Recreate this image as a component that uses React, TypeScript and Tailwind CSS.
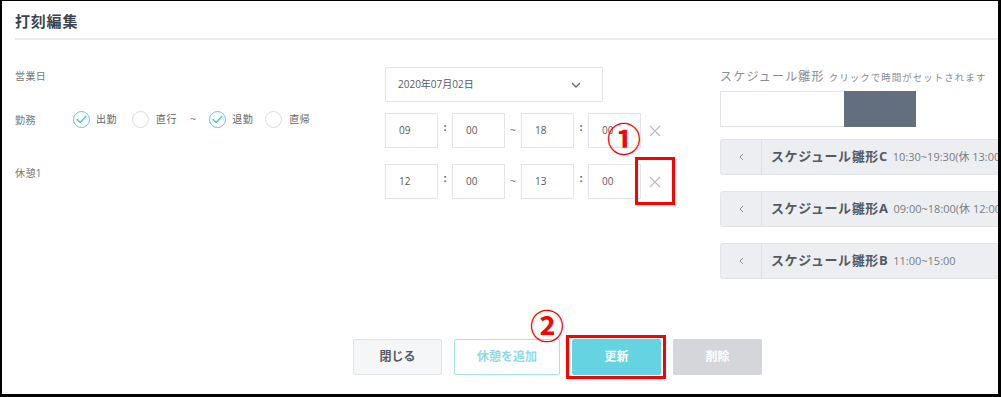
import React from "react";

const XIcon = () => (
  <svg width="12" height="12" viewBox="0 0 12 12" className="block">
    <path d="M1 1 L11 11 M11 1 L1 11" stroke="#b9bcc2" strokeWidth="1.1" fill="none" />
  </svg>
);

const Check = ({ checked }: { checked: boolean }) => (
  <span
    className={
      checked
        ? "w-[17px] h-[17px] rounded-full border-[1.5px] border-[#5ccbdc] flex items-center justify-center bg-white"
        : "w-[17px] h-[17px] rounded-full border-[1.5px] border-[#dcdde0] bg-white"
    }
  >
    {checked && (
      <svg width="11" height="9" viewBox="0 0 11 9">
        <path d="M1.2 4.6 L4.2 7.5 L9.8 1.4" stroke="#5ccbdc" strokeWidth="1.6" fill="none" strokeLinecap="round" strokeLinejoin="round" />
      </svg>
    )}
  </span>
);

const TimeBox = ({ v }: { v: string }) => (
  <div className="w-[53px] shrink-0 h-full border border-[#e3e5e9] bg-white flex items-center pl-[13px] text-[10px] text-[#555a62]">
    {v}
  </div>
);

const TimeRow = ({ a, b, c, d, cls }: { a: string; b: string; c: string; d: string; cls: string }) => (
  <div className={`flex items-stretch h-[35px] ${cls}`}>
    <TimeBox v={a} />
    <div className="w-[14px] flex justify-center text-[11px] text-[#666] font-bold pt-[6px]">:</div>
    <TimeBox v={b} />
    <div className="w-[16px] flex justify-center items-center text-[11px] text-[#777]">~</div>
    <TimeBox v={c} />
    <div className="w-[14px] flex justify-center text-[11px] text-[#666] font-bold pt-[6px]">:</div>
    <TimeBox v={d} />
    <div className="ml-[8px] flex items-center">
      <XIcon />
    </div>
  </div>
);

const Acc = ({ title, time, cls }: { title: string; time: string; cls: string }) => (
  <div className={`w-[330px] shrink-0 h-[36px] flex items-stretch bg-[#eceef1] border border-[#e2e4e8] rounded-[3px] ${cls}`}>
    <div className="w-[41px] shrink-0 flex items-center justify-center border-r border-[#dfe1e5]">
      <svg width="5" height="8" viewBox="0 0 5 8">
        <path d="M4 1 L1 4 L4 7" stroke="#8a8e95" strokeWidth="1" fill="none" />
      </svg>
    </div>
    <div className="flex items-center pl-[9px] whitespace-nowrap">
      <span className="text-[13px] font-bold text-[#555a62] tracking-[0.6px]">{title}</span>
      <span className="ml-[5px] text-[11px] text-[#7a7e85]">{time}</span>
    </div>
  </div>
);

export default function App() {
  return (
    <div className="w-[1001px] h-[397px] bg-white border-black border-t border-l-2 border-r-[3px] border-b-[3px] overflow-hidden relative font-['Open_Sans','Noto_Sans_CJK_JP',sans-serif]">
      <div className="pl-[13px]">
        <div className="h-[37px] pt-[4px] flex items-center text-[15px] font-bold text-[#3d4450] tracking-[0.8px]">
          打刻編集
        </div>
        <div className="h-[2px] bg-[#ebebf1]" />
        <div className="flex">
          {/* left labels */}
          <div className="w-[370px] shrink-0 flex flex-col">
            <div className="mt-[28px] h-[16px] flex items-center text-[10px] text-[#777] tracking-[0.4px]">営業日</div>
            <div className="mt-[26px] h-[18px] flex items-center">
              <div className="w-[58px] text-[10px] text-[#777] tracking-[0.4px] pt-[2px]">勤務</div>
              <Check checked />
              <span className="ml-[6px] text-[10px] text-[#666] tracking-[0.5px]">出勤</span>
              <span className="ml-[15px] flex"><Check checked={false} /></span>
              <span className="ml-[7px] text-[10px] text-[#666] tracking-[0.5px]">直行</span>
              <span className="ml-[13px] text-[11px] text-[#777]">~</span>
              <span className="ml-[13px] flex"><Check checked /></span>
              <span className="ml-[6px] text-[10px] text-[#666] tracking-[0.5px]">退勤</span>
              <span className="ml-[12px] flex"><Check checked={false} /></span>
              <span className="ml-[7px] text-[10px] text-[#666] tracking-[0.5px]">直帰</span>
            </div>
            <div className="mt-[37px] h-[16px] flex items-center text-[10px] text-[#777] tracking-[0.4px]">休憩1</div>
          </div>
          {/* middle */}
          <div className="w-[335px] shrink-0 flex flex-col">
            <div className="mt-[27px] w-[218px] h-[35px] border border-[#e3e5e9] flex items-center justify-between pl-[12px] pr-[21px]">
              <span className="text-[10px] text-[#555a62]">2020年07月02日</span>
              <svg width="10" height="6" viewBox="0 0 10 6">
                <path d="M1 1 L5 5 L9 1" stroke="#666b73" strokeWidth="1.4" fill="none" />
              </svg>
            </div>
            <TimeRow a="09" b="00" c="18" d="00" cls="mt-[11px]" />
            <TimeRow a="12" b="00" c="13" d="00" cls="mt-[16px]" />
          </div>
          {/* right */}
          <div className="flex-1 min-w-0 flex flex-col">
            <div className="mt-[28px] h-[16px] flex items-baseline whitespace-nowrap text-[#8a8d93]">
              <span className="text-[12px] tracking-[1.2px]">スケジュール雛形</span>
              <span className="ml-[4px] text-[9.5px] tracking-[1px]">クリックで時間がセットされます</span>
            </div>
            <div className="mt-[7px] flex h-[36px]">
              <div className="w-[124px] border border-[#e3e5e9] border-r-0 bg-white" />
              <div className="w-[72px] bg-[#636e7e]" />
            </div>
            <Acc title="スケジュール雛形C" time="10:30~19:30(休 13:00~14:00)" cls="mt-[12px]" />
            <Acc title="スケジュール雛形A" time="09:00~18:00(休 12:00~13:00)" cls="mt-[16px]" />
            <Acc title="スケジュール雛形B" time="11:00~15:00" cls="mt-[16px]" />
          </div>
        </div>
        <div className="mt-[60px] ml-[338px] flex gap-[12px] h-[36px]">
          <button className="w-[89px] h-full bg-[#f5f6f8] border border-[#e1e4e9] rounded-[2px] text-[12px] font-bold text-[#555a62]">閉じる</button>
          <button className="w-[106px] h-full bg-white border-[1.5px] border-[#a9e2ec] rounded-[2px] text-[12px] font-bold text-[#92d9e5]">休憩を追加</button>
          <button className="w-[89px] h-full bg-[#66d3e3] rounded-[2px] text-[12px] font-bold text-white">更新</button>
          <button className="w-[89px] h-full bg-[#d4d6d9] rounded-[2px] text-[12px] font-bold text-white">削除</button>
        </div>
      </div>

      {/* annotations */}
      <div className="absolute left-[604px] top-[119px] w-[36px] h-[36px] flex items-center justify-center text-[34px] leading-none font-bold text-[#ff0000] font-['Noto_Sans_CJK_JP',sans-serif]">①</div>
      <div className="absolute left-[633px] top-[156px] w-[40px] h-[48px] border-[3px] border-[#ff0000]" />
      <div className="absolute left-[527px] top-[306px] w-[36px] h-[36px] flex items-center justify-center text-[34px] leading-none font-bold text-[#ff0000] font-['Noto_Sans_CJK_JP',sans-serif]">②</div>
      <div className="absolute left-[564px] top-[334px] w-[100px] h-[44px] border-[3px] border-[#ff0000]" />
    </div>
  );
}
